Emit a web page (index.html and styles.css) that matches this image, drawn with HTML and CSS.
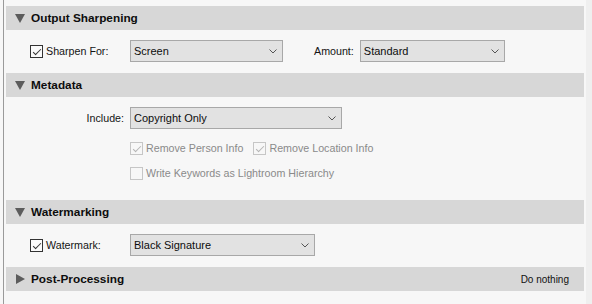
FILE: index.html
```html
<!DOCTYPE html>
<html lang="en">
<head>
    <meta charset="UTF-8">
    <title>Export Settings</title>
    <link rel="stylesheet" href="styles.css">
</head>
<body>
    <div class="panel">
        <div class="panel__edge"></div>

        <div class="panel__content">
            <!-- output sharpening -->
            <div class="head">
                <span class="tri tri--down"></span>
                <span class="head__title">Output Sharpening</span>
            </div>
            <div class="sect sect--short">
                <div class="row">
                    <label class="lab lab--check"><span class="box box--on"></span>Sharpen For:</label>
                    <div class="select select--screen"><span>Screen</span><svg width="8" height="5" viewBox="0 0 8 5"><polyline points="0.5,0.5 4,4 7.5,0.5" fill="none" stroke="#555" stroke-width="1"/></svg></div>
                    <span class="amount">Amount:</span>
                    <div class="select select--amount"><span>Standard</span><svg width="8" height="5" viewBox="0 0 8 5"><polyline points="0.5,0.5 4,4 7.5,0.5" fill="none" stroke="#555" stroke-width="1"/></svg></div>
                </div>
            </div>

            <!-- metadata -->
            <div class="head">
                <span class="tri tri--down"></span>
                <span class="head__title">Metadata</span>
            </div>
            <div class="sect sect--meta">
                <div class="row">
                    <span class="lab lab--right">Include:</span>
                    <div class="select select--include"><span>Copyright Only</span><svg width="8" height="5" viewBox="0 0 8 5"><polyline points="0.5,0.5 4,4 7.5,0.5" fill="none" stroke="#555" stroke-width="1"/></svg></div>
                </div>
                <div class="opts">
                    <label class="opt"><span class="box box--dis box--on-dis"></span>Remove Person Info</label>
                    <label class="opt"><span class="box box--dis box--on-dis"></span>Remove Location Info</label>
                </div>
                <div class="opts opts--second">
                    <label class="opt"><span class="box box--dis"></span>Write Keywords as Lightroom Hierarchy</label>
                </div>
            </div>

            <!-- watermarking -->
            <div class="head">
                <span class="tri tri--down"></span>
                <span class="head__title">Watermarking</span>
            </div>
            <div class="sect sect--short">
                <div class="row">
                    <label class="lab lab--check"><span class="box box--on"></span>Watermark:</label>
                    <div class="select select--mark"><span>Black Signature</span><svg width="8" height="5" viewBox="0 0 8 5"><polyline points="0.5,0.5 4,4 7.5,0.5" fill="none" stroke="#555" stroke-width="1"/></svg></div>
                </div>
            </div>

            <!-- post-processing -->
            <div class="head">
                <span class="tri tri--right"></span>
                <span class="head__title">Post-Processing</span>
                <span class="head__note">Do nothing</span>
            </div>
        </div>

        <div class="panel__scroll"></div>
    </div>
</body>
</html>
```

FILE: styles.css
```css
html, body {
    margin: 0;
    padding: 0;
    background-color: #f7f7f7;
    font-family: "Liberation Sans", Arial, sans-serif;
    font-size: 10.7px;
    color: #141414;
}

.panel {
    display: flex;
    height: 304px;
    background-color: #f7f7f7;
}

.panel__edge {
    width: 1px;
    margin-left: 3px;
    background-color: #9a9a9a;
}

.panel__content {
    flex: 1;
    padding: 6px 2px 0 2px;
}

.panel__scroll {
    width: 6px;
    background-color: #efefef;
}

.head {
    display: flex;
    align-items: center;
    height: 24px;
    padding-left: 10px;
    padding-right: 15px;
    background-color: #d7d7d7;
}

.head__title {
    font-weight: bold;
    font-size: 11.8px;
    color: #0d0d0d;
    margin-left: 6px;
}

.head__note {
    margin-left: auto;
    font-size: 10px;
    color: #111;
}

.tri {
    width: 0;
    height: 0;
}

.tri--down {
    border-left: 5px solid transparent;
    border-right: 5px solid transparent;
    border-top: 9px solid #5c5c5c;
    margin-left: -1px;
    margin-top: 1px;
}

.tri--right {
    border-top: 5px solid transparent;
    border-bottom: 5px solid transparent;
    border-left: 9px solid #5c5c5c;
}

.sect--short {
    height: 43px;
    padding-top: 10px;
    box-sizing: border-box;
}

.sect--meta {
    height: 103px;
    padding-top: 10px;
    box-sizing: border-box;
}

.row {
    display: flex;
    align-items: center;
    height: 22px;
}

.lab {
    display: flex;
    align-items: center;
    width: 124px;
    box-sizing: border-box;
}

.lab--check {
    padding-left: 24px;
}

.lab--right {
    justify-content: flex-end;
    padding-right: 6px;
}

.box {
    width: 11px;
    height: 11px;
    border: 1px solid #333;
    margin-right: 3px;
    background-color: #fbfbfb;
    position: relative;
}

.box--on::after,
.box--on-dis::after {
    content: "";
    position: absolute;
    left: 2px;
    top: 0px;
    width: 7px;
    height: 3px;
    border-left: 1px solid #333;
    border-bottom: 1px solid #333;
    transform: translate(0, 3px) rotate(-45deg);
    transform-origin: center;
}

.box--dis {
    border-color: #c6c6c6;
    background-color: #f7f7f7;
}

.box--on-dis::after {
    border-color: #b4b4b4;
}

.select {
    display: flex;
    align-items: center;
    justify-content: space-between;
    height: 22px;
    box-sizing: border-box;
    padding: 0 5px 0 3px;
    border: 1px solid #a8a8a8;
    background-color: #e2e2e2;
    color: #0d0d0d;
    font-size: 11px;
}

.select--screen {
    width: 153px;
}

.select--amount {
    width: 145px;
}

.select--include {
    width: 212px;
}

.select--mark {
    width: 185px;
}

.amount {
    margin-left: 31px;
    margin-right: 6px;
}

.opts {
    display: flex;
    align-items: center;
    margin-left: 124px;
    margin-top: 12px;
    height: 14px;
}

.opts--second {
    margin-top: 11px;
}

.opt {
    display: flex;
    align-items: center;
    color: #8a8a8a;
    margin-right: 10px;
}
```
